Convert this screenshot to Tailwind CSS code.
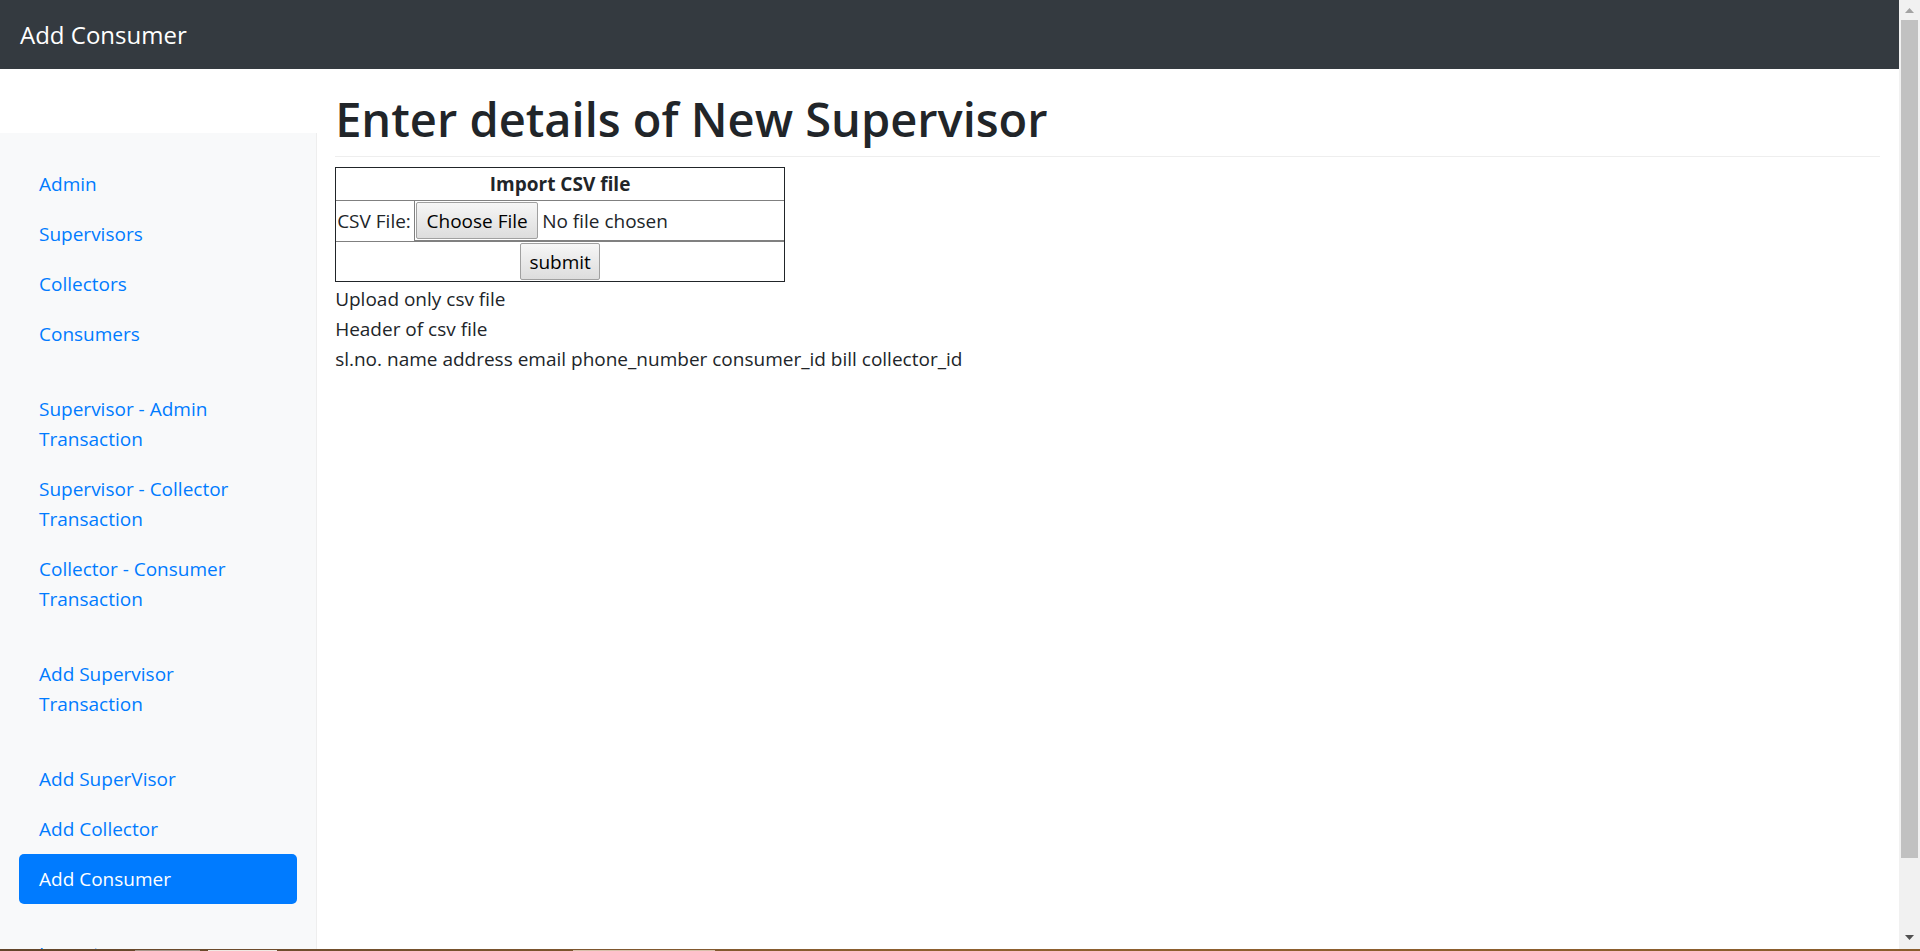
<!DOCTYPE html>
<html lang="en">
<head>
<meta charset="utf-8">
<title>Add Consumer</title>
<script src="https://cdn.jsdelivr.net/npm/@tailwindcss/browser@4"></script>
</head>
<body class="flex h-screen flex-col overflow-hidden bg-white font-['Open_Sans','Noto_Sans',sans-serif] text-[19px] leading-[30px] text-[#212529]">
<div class="flex min-h-0 flex-1">
  <div class="flex min-w-0 flex-1 flex-col overflow-hidden">
    <nav class="flex h-[69px] shrink-0 items-center bg-[#343a40] px-5">
      <a href="#" class="text-[24px] text-white">Add Consumer</a>
    </nav>
    <div class="flex min-h-0 flex-1">
      <aside class="mt-16 w-[16.7%] shrink-0 overflow-hidden border-r border-[#eeeeee] bg-[#f8f9fa] px-[19px] pt-[26px] text-[#007bff]">
        <ul class="flex flex-col">
          <li><a href="#" class="block px-5 py-[10px]">Admin</a></li>
          <li><a href="#" class="block px-5 py-[10px]">Supervisors</a></li>
          <li><a href="#" class="block px-5 py-[10px]">Collectors</a></li>
          <li><a href="#" class="block px-5 py-[10px]">Consumers</a></li>
        </ul>
        <ul class="mt-[25px] flex flex-col">
          <li><a href="#" class="block px-5 py-[10px]">Supervisor - Admin<br>Transaction</a></li>
          <li><a href="#" class="block px-5 py-[10px]">Supervisor - Collector Transaction</a></li>
          <li><a href="#" class="block px-5 py-[10px]">Collector - Consumer Transaction</a></li>
        </ul>
        <ul class="mt-[25px] flex flex-col">
          <li><a href="#" class="block px-5 py-[10px]">Add Supervisor<br>Transaction</a></li>
        </ul>
        <ul class="mt-[25px] flex flex-col">
          <li><a href="#" class="block px-5 py-[10px]">Add SuperVisor</a></li>
          <li><a href="#" class="block px-5 py-[10px]">Add Collector</a></li>
          <li><a href="#" class="block rounded-[5px] bg-[#007bff] px-5 py-[10px] text-white">Add Consumer</a></li>
        </ul>
        <ul class="mt-[25px] flex flex-col">
          <li><a href="#" class="block px-5 py-[10px]">Import</a></li>
        </ul>
      </aside>
      <main class="min-w-0 flex-1 pt-5 pr-[19px] pl-[18px]">
        <h1 class="text-[47px] leading-[60px] font-semibold">Enter details of New Supervisor</h1>
        <hr class="mt-[7px] mb-[10px] border-[#eeeeee]">
        <form class="mb-[2px]">
          <table class="w-[450px] border-separate border-spacing-0 border border-[#212529]">
            <tr><th colspan="2" class="border-b border-[#808080] p-px font-bold">Import CSV file</th></tr>
            <tr>
              <td class="w-[79px] border-r border-b border-[#808080] p-px whitespace-nowrap"><label for="csv">CSV File:</label></td>
              <td class="border-b-2 border-[#808080] p-px"><input id="csv" type="file" class="block h-[37px] w-full file:mr-1 file:h-[37px] file:w-[122px] file:rounded-[2px] file:border file:border-solid file:border-[#a0a0a0] file:bg-linear-to-b file:from-[#f6f6f6] file:to-[#dddddd] file:text-black"></td>
            </tr>
            <tr><td colspan="2" class="p-px text-center"><button type="submit" class="mx-auto block h-[37px] w-20 rounded-[2px] border border-[#a0a0a0] bg-linear-to-b from-[#f6f6f6] to-[#dddddd] text-black">submit</button></td></tr>
          </table>
        </form>
        <p>Upload only csv file</p>
        <p>Header of csv file</p>
        <p>sl.no. name address email phone_number consumer_id bill collector_id</p>
      </main>
    </div>
  </div>
  <div class="flex w-[21px] shrink-0 flex-col items-center bg-[#f1f1f1]" aria-hidden="true">
    <svg class="h-5 w-[21px] shrink-0" viewBox="0 0 21 20"><path d="M6 13 10.500 8 15 13Z" fill="#a3a3a3"/></svg>
    <div class="h-[838px] w-[17px] bg-[#c1c1c1]"></div>
    <svg class="mt-auto h-5 w-[21px] shrink-0" viewBox="0 0 21 20"><path d="M6 6h9L10.500 11Z" fill="#505050"/></svg>
  </div>
</div>
<div class="flex h-[2px] shrink-0 bg-linear-to-r from-[#62452a] via-[#8f6130] to-[#8a5d2d]" aria-hidden="true">
  <div class="ml-[135px] h-px w-[65px] self-end bg-[#a8978b]"></div>
  <div class="ml-2 h-px w-[69px] self-end bg-[#f0e8e2]"></div>
  <div class="ml-[296px] h-px w-[142px] self-end bg-[#d8bfaa]"></div>
</div>
</body>
</html>
